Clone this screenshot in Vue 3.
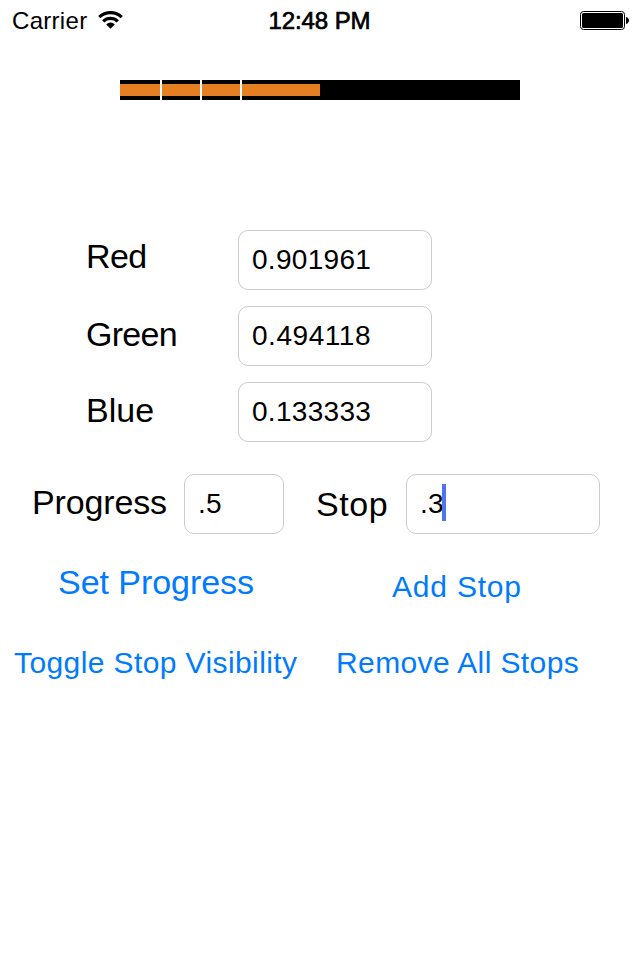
<script setup>
import { reactive, ref } from 'vue'

const channels = reactive([
  { name: 'Red', value: '0.901961' },
  { name: 'Green', value: '0.494118' },
  { name: 'Blue', value: '0.133333' },
])
const progress = ref('.5')
const stop = ref('.3')
const stops = [0.1, 0.2, 0.3]
</script>

<template>
  <main class="screen">
    <header class="status">
      <div class="carrier">
        <span class="carrier-name">Carrier</span>
        <svg class="wifi" width="26" height="20" viewBox="0 0 26 20">
          <path d="M1.3 7.1 A16 16 0 0 1 23.7 7.1" fill="none" stroke="#000" stroke-width="3.2" />
          <path d="M5.2 11.3 A10.6 10.6 0 0 1 19.8 11.3" fill="none" stroke="#000" stroke-width="3.2" />
          <path d="M8.2 14.4 A6 6 0 0 1 16.8 14.4 L12.5 18.8 Z" fill="#000" />
        </svg>
      </div>
      <div class="time">12:48 PM</div>
      <div class="power">
        <svg width="50" height="20" viewBox="0 0 50 20">
          <rect x="0.5" y="0.5" width="44" height="18" rx="3" fill="#fff" stroke="#000" />
          <rect x="2" y="2" width="41" height="15" rx="1.5" fill="#000" />
          <path d="M46 6 C48.2 6.6 49 8 49 9.5 C49 11 48.2 12.4 46 13 Z" fill="#000" />
        </svg>
      </div>
    </header>

    <div class="track">
      <div class="fill" :style="{ width: Number(progress) * 100 + '%' }"></div>
      <i v-for="s in stops" :key="s" class="stop-mark" :style="{ left: s * 100 + '%' }"></i>
    </div>

    <section class="channels">
      <div v-for="c in channels" :key="c.name" class="channel" :class="c.name.toLowerCase()">
        <label class="label">{{ c.name }}</label>
        <div class="field">{{ c.value }}</div>
      </div>
    </section>

    <section class="values">
      <label class="label progress-label">Progress</label>
      <div class="field short">{{ progress }}</div>
      <label class="label stop-label">Stop</label>
      <div class="field">{{ stop }}<span class="caret"></span></div>
    </section>

    <section class="actions first">
      <button class="large">Set Progress</button>
      <button class="add">Add Stop</button>
    </section>
    <section class="actions second">
      <button class="toggle">Toggle Stop Visibility</button>
      <button class="remove">Remove All Stops</button>
    </section>
  </main>
</template>

<style>
body {
  background: #fff;
}
</style>

<style scoped>
.screen {
  width: 640px;
  height: 960px;
  overflow: hidden;
  background: #fff;
  color: #000;
  font-family: "Liberation Sans", Arial, sans-serif;
}
.status {
  display: grid;
  grid-template-columns: 1fr auto 1fr;
  height: 40px;
  padding: 0 12px 0 11px;
  font-size: 24px;
  line-height: 41px;
}
.carrier {
  display: flex;
  align-items: flex-start;
}
.carrier-name {
  width: 86px;
  padding-left: 1px;
  letter-spacing: 0.3px;
}
.wifi {
  margin-top: 10px;
}
.time {
  -webkit-text-stroke: 0.7px #000;
  letter-spacing: -0.1px;
}
.power {
  display: flex;
  justify-content: flex-end;
  padding-top: 11px;
}
.power svg {
  flex: none;
  margin-right: -2px;
}
.track {
  position: relative;
  width: 400px;
  height: 20px;
  margin: 40px auto 0;
  padding: 4px 0;
  box-sizing: border-box;
  background: #000;
}
.fill {
  height: 12px;
  background: #e67e22;
}
.stop-mark {
  position: absolute;
  top: 0;
  width: 2px;
  height: 20px;
  background: #fff;
}
.channels {
  display: flex;
  flex-direction: column;
  gap: 16px;
  margin-top: 130px;
  padding-left: 86px;
}
.channel {
  display: flex;
  height: 60px;
}
.label {
  font-size: 34px;
  line-height: 40px;
  white-space: nowrap;
}
.channel .label {
  width: 152px;
  padding-top: 8px;
  box-sizing: border-box;
}
.channel.red .label {
  padding-top: 6px;
  letter-spacing: -0.6px;
}
.channel.green .label {
  letter-spacing: -0.7px;
}
.field {
  display: flex;
  align-items: center;
  box-sizing: border-box;
  width: 194px;
  height: 60px;
  padding: 0 13px;
  border: 1px solid #ccc;
  border-radius: 10px;
  font-size: 28px;
  letter-spacing: 0.3px;
}
.channel.green .field {
  letter-spacing: 0.55px;
}
.field.short {
  width: 100px;
}
.caret {
  width: 4px;
  height: 37px;
  margin: 0 0 4px -2px;
  background: #4f74f2;
}
.values {
  display: flex;
  margin-top: 32px;
  padding-left: 32px;
}
.progress-label {
  width: 152px;
  padding-top: 8px;
  letter-spacing: -0.15px;
}
.stop-label {
  width: 90px;
  margin-left: 32px;
  padding-top: 10px;
  letter-spacing: 0.6px;
}
.actions {
  display: flex;
}
.actions.first {
  height: 76px;
  padding: 28px 0 0 58px;
  box-sizing: border-box;
}
.actions.second {
  padding: 33px 0 0 14px;
}
button {
  padding: 0;
  border: 0;
  background: none;
  color: #007aff;
  font-family: inherit;
  font-size: 30px;
  line-height: 40px;
  height: 40px;
  text-align: left;
  white-space: nowrap;
  letter-spacing: 0.4px;
}
.large {
  width: 334px;
  font-size: 34px;
  letter-spacing: -0.05px;
}
.add {
  margin-top: 5px;
  letter-spacing: 0.8px;
}
.toggle {
  width: 322px;
}
</style>
